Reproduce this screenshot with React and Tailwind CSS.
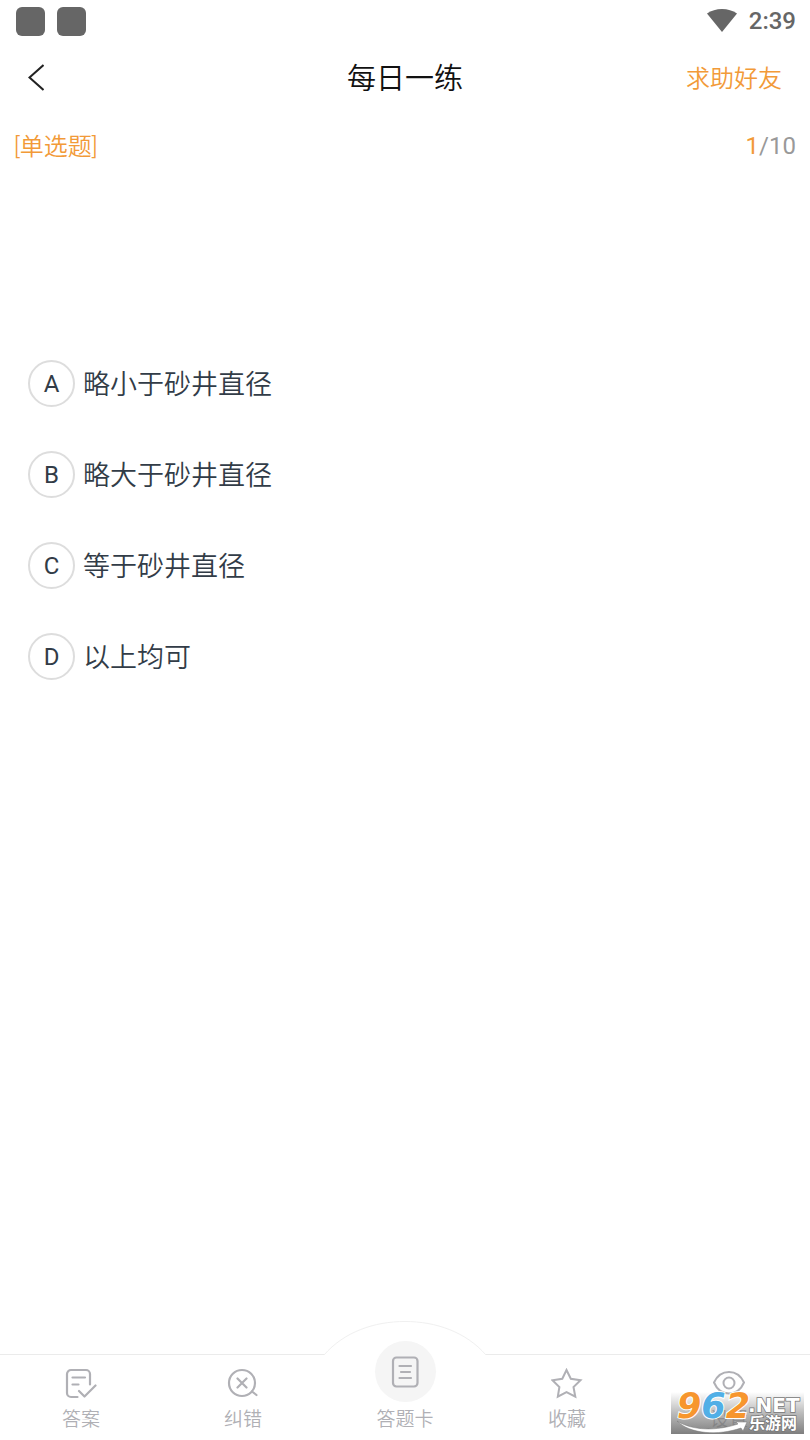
// Daily practice question page
import { useState } from 'react';

const options = [
  { key: 'A', text: '略小于砂井直径' },
  { key: 'B', text: '略大于砂井直径' },
  { key: 'C', text: '等于砂井直径' },
  { key: 'D', text: '以上均可' },
];

function StatusBar() {
  return (
    <div className="flex h-[42px] items-center justify-between pr-[14px] pl-4 text-[#666666]">
      <div className="flex gap-3">
        <span className="size-[29px] rounded-md bg-[#666666]" />
        <span className="size-[29px] rounded-md bg-[#666666]" />
      </div>
      <div className="flex items-center gap-3">
        <svg className="h-6 w-[30px]" viewBox="0 0 30 24" fill="currentColor">
          <path d="M0 4.500C4.200 1.500 9.400 0 15 0S25.800 1.500 30 4.500L15 23Z" />
        </svg>
        <span className="text-2xl font-medium">2:39</span>
      </div>
    </div>
  );
}

function Header() {
  return (
    <header className="grid h-[72px] grid-cols-3 items-center px-7">
      <button type="button" aria-label="返回" className="w-fit">
        <svg className="h-7 w-4" viewBox="0 0 16 28" fill="none" stroke="#222222" strokeWidth="2">
          <path d="M15.500 1L1.500 13.500L15.500 26" />
        </svg>
      </button>
      <h1 className="pt-0.5 text-center text-[29px] leading-9 font-[350] text-[#111111]">每日一练</h1>
      <button type="button" className="justify-self-end pt-0.5 text-2xl font-[350] text-[#f29a38]">
        求助好友
      </button>
    </header>
  );
}

function Option({ option, checked, onChange }) {
  return (
    <label className="flex w-fit items-center gap-2 text-[#323c47]">
      <span className="grid place-items-center">
        <input
          type="radio"
          name="answer"
          value={option.key}
          checked={checked}
          onChange={onChange}
          className="col-start-1 row-start-1 size-[47px] appearance-none rounded-full border-2 border-[#dddddd] checked:border-[#f29a38]"
        />
        <span className="col-start-1 row-start-1 text-2xl">{option.key}</span>
      </span>
      <span className="pt-0.5 text-[27px] leading-9 font-[350]">{option.text}</span>
    </label>
  );
}

function AnswerIcon() {
  return (
    <svg className="size-8" viewBox="0 0 32 32" fill="none" stroke="currentColor" strokeWidth="2.200" strokeLinecap="round" strokeLinejoin="round">
      <path d="M12.500 29H6A4 4 0 0 1 2 25V6A4 4 0 0 1 6 2H21A4 4 0 0 1 25 6V16.500" />
      <path d="M7.500 9.500H20M7.500 16.500H13.500M14 23L19.500 28.500L30.500 17.500" />
    </svg>
  );
}

function CorrectIcon() {
  return (
    <svg className="size-8" viewBox="0 0 32 32" fill="none" stroke="currentColor" strokeWidth="2.200" strokeLinecap="round">
      <circle cx="15" cy="15" r="13" />
      <path d="M10.500 10.500L19.500 19.500M19.500 10.500L10.500 19.500M25 23.500L29.500 27" />
    </svg>
  );
}

function CardIcon() {
  return (
    <svg className="size-8" viewBox="0 0 32 32" fill="none" stroke="currentColor" strokeWidth="2.200" strokeLinecap="round">
      <rect x="4" y="1.500" width="24.500" height="29" rx="3.500" />
      <path d="M10.500 10H22M12 16H21M10.500 22H22" />
    </svg>
  );
}

function StarIcon() {
  return (
    <svg className="size-8" viewBox="0 0 32 32" fill="none" stroke="currentColor" strokeWidth="2">
      <path d="M15.500 2L19.800 10.800L29.500 12.200L22.500 19L24.300 28.700L15.500 24.200L6.800 28.700L8.400 19L1.500 12.200L11.300 10.800Z" />
    </svg>
  );
}

function EyeIcon() {
  return (
    <svg className="size-8" viewBox="0 0 32 32" fill="none" stroke="currentColor" strokeWidth="2">
      <path d="M1 14.500C4 8 9.500 4 16 4S28 8 31 14.500C28 21.500 22.500 25.500 16 25.500S4 21.500 1 14.500Z" />
      <circle cx="16" cy="15" r="5.500" />
    </svg>
  );
}

function NavItem({ icon, label }) {
  return (
    <button type="button" className="flex flex-1 flex-col items-center gap-1.5 pt-[13px]">
      {icon}
      <span className="text-[19px] leading-7 font-[350]">{label}</span>
    </button>
  );
}

function BottomNav() {
  return (
    <nav className="relative flex h-[86px] border-t border-[#ebebeb] bg-white text-[#b0b0b5]">
      {/* Raised arc behind the middle button */}
      <svg className="absolute -top-[34px] left-1/2 h-9 w-[162px] -translate-x-1/2" viewBox="0 0 162 36">
        <path d="M0 34C20 11 50 .5 81 .5S142 11 162 34V36H0Z" fill="#ffffff" />
        <path d="M0 34C20 11 50 .5 81 .5S142 11 162 34" fill="none" stroke="#f0f0f0" />
      </svg>
      <NavItem icon={<AnswerIcon />} label="答案" />
      <NavItem icon={<CorrectIcon />} label="纠错" />
      <button type="button" className="relative -mt-[14px] flex flex-1 flex-col items-center gap-1">
        <span className="grid size-[61px] place-items-center rounded-full bg-[#f5f5f5]">
          <CardIcon />
        </span>
        <span className="text-[19px] leading-7 font-[350]">答题卡</span>
      </button>
      <NavItem icon={<StarIcon />} label="收藏" />
      <NavItem icon={<EyeIcon />} label="设置" />
      <SiteMark />
    </nav>
  );
}

// Site logo that lies over the corner of the nav
function SiteMark() {
  return (
    <svg className="pointer-events-none absolute right-1.5 bottom-1.5 h-[42px] w-[133px] overflow-visible" viewBox="0 0 133 42">
      <defs>
        <linearGradient id="mark" x1="0" y1="0" x2="0" y2="1">
          <stop offset="0" stopColor="#777777" stopOpacity="0" />
          <stop offset="0.500" stopColor="#777777" stopOpacity="0.500" />
          <stop offset="1" stopColor="#707070" stopOpacity="0.900" />
        </linearGradient>
      </defs>
      <rect width="133" height="42" fill="url(#mark)" />
      <path d="M6 29C22 39 46 39 67 32L65 30L76 30L72 39L70 36C47 44 19 42 6 29Z" fill="#ffffff" stroke="#777777" strokeWidth="0.500" />
      <text x="6" y="26" fontFamily="DejaVu Sans" fontWeight="bold" fontStyle="italic" fontSize="35" stroke="#ffffff" strokeWidth="2" paintOrder="stroke">
        <tspan fill="#f7962e">9</tspan>
        <tspan fill="#51afe6">6</tspan>
        <tspan fill="#f7962e">2</tspan>
      </text>
      <g fill="#ffffff" stroke="#777777" strokeWidth="1.500" paintOrder="stroke" fontWeight="bold">
        <text x="77" y="20" fontFamily="DejaVu Sans" fontSize="20">.NET</text>
        <text x="78" y="37" fontFamily="Noto Sans CJK SC" fontSize="16">乐游网</text>
      </g>
    </svg>
  );
}

export default function App() {
  const [answer, setAnswer] = useState('');

  return (
    <div className="flex min-h-screen flex-col bg-white font-[Roboto,'Noto_Sans_CJK_SC',sans-serif]">
      <StatusBar />
      <Header />

      <div className="flex h-16 items-center justify-between px-[14px] text-2xl">
        <span className="pt-0.5 font-[350] text-[#f29a38]">[单选题]</span>
        <span className="text-[#999999]">
          <span className="text-[#f29a38]">1</span>/10
        </span>
      </div>

      <main className="flex flex-1 flex-col gap-11 px-7 pt-[182px]">
        {options.map((option) => (
          <Option
            key={option.key}
            option={option}
            checked={answer === option.key}
            onChange={() => setAnswer(option.key)}
          />
        ))}
      </main>

      <BottomNav />
    </div>
  );
}
